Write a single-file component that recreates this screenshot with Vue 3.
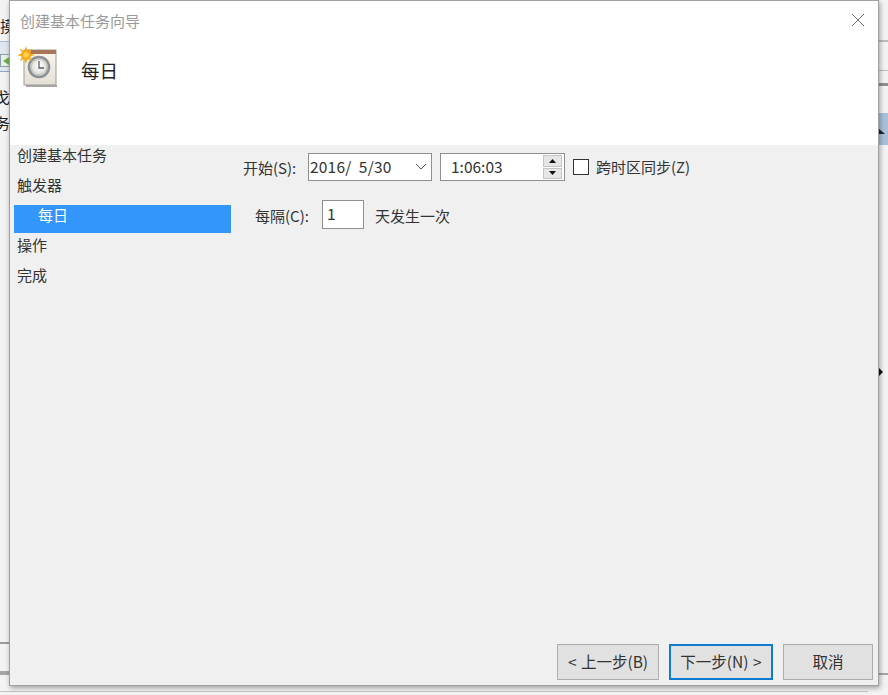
<script setup>
const steps = [
  { label: '创建基本任务' },
  { label: '触发器' },
  { label: '每日', active: true },
  { label: '操作' },
  { label: '完成' },
]
</script>

<template>
  <div class="screen">
    <div class="behind">
      <span class="frag f1">摸</span>
      <div class="band">
        <i class="mini"></i>
        <svg class="arrow" width="6" height="8" viewBox="0 0 6 8"><path d="M0 4 L6 0 L6 8 Z" fill="#6fb04f" /></svg>
      </div>
      <span class="frag f2">戈</span>
      <span class="frag f3">务</span>
      <div class="line l1"></div>
      <div class="line l2"></div>
      <div class="line l3"></div>
      <div class="rband"></div>
      <div class="rline r1"></div>
      <div class="rline r2"></div>
      <div class="rline r3"></div>
      <div class="rline r4"></div>
      <svg class="tri1" width="10" height="12" viewBox="0 0 10 12"><path d="M0 6 L7 12 L0 12 Z" fill="#1a2430" /></svg>
      <svg class="tri2" width="6" height="10" viewBox="0 0 6 10"><path d="M0 0 L5 5 L0 10 Z" fill="#111" /></svg>
    </div>

    <div class="dialog">
      <header class="head">
        <div class="titlebar">
          <span class="title">创建基本任务向导</span>
          <svg class="close" width="14" height="14" viewBox="0 0 14 14">
            <path d="M1 1 L13 13 M13 1 L1 13" stroke="#6f6f6f" stroke-width="1" fill="none" />
          </svg>
        </div>
        <div class="banner">
          <svg class="logo" width="42" height="42" viewBox="0 0 42 42">
            <defs>
              <linearGradient id="page" x1="0" y1="0" x2="0" y2="1">
                <stop offset="0" stop-color="#fbf7ee" />
                <stop offset="1" stop-color="#e4e0d6" />
              </linearGradient>
              <radialGradient id="face" cx="0.5" cy="0.45" r="0.6">
                <stop offset="0" stop-color="#ffffff" />
                <stop offset="1" stop-color="#cfcfc6" />
              </radialGradient>
            </defs>
            <path d="M9 39 L40 39 L40 41 L9 41 Z" fill="#a9a9a5" />
            <rect x="7" y="4" width="32" height="35" fill="url(#page)" stroke="#9b9b96" stroke-width="1" />
            <rect x="7" y="4" width="32" height="4" fill="#a9765a" />
            <circle cx="22" cy="21" r="10" fill="url(#face)" stroke="#8b8f96" stroke-width="2.6" />
            <circle cx="22" cy="21" r="7.6" fill="none" stroke="#c6c4b8" stroke-width="1" />
            <path d="M22 15 L22 22 L27 22" stroke="#5a6068" stroke-width="1.3" fill="none" />
            <g fill="#f6ab16">
              <circle cx="9" cy="9" r="5" />
              <path d="M9 0 L10.6 5 L7.4 5 Z M9 18 L10.6 13 L7.4 13 Z M0 9 L5 7.4 L5 10.6 Z M18 9 L13 7.4 L13 10.6 Z M2.6 2.6 L6.8 5 L5 6.8 Z M15.4 2.6 L13 6.8 L11.2 5 Z M2.6 15.4 L5 11.2 L6.8 13 Z M15.4 15.4 L11.2 13 L13 11.2 Z" />
            </g>
            <circle cx="9" cy="9" r="2.8" fill="#ffd34e" />
          </svg>
          <span class="heading">每日</span>
        </div>
      </header>

      <div class="body">
        <nav class="steps">
          <div v-for="s in steps" :key="s.label" class="step" :class="{ active: s.active }">{{ s.label }}</div>
        </nav>

        <main class="form">
          <div class="row1">
            <label class="lab">开始(S):</label>
            <div class="field combo">
              <span class="dval">2016/&nbsp;&nbsp;5/30</span>
              <svg width="12" height="7" viewBox="0 0 12 7"><path d="M1 1 L6 6 L11 1" stroke="#555" stroke-width="1" fill="none" /></svg>
            </div>
            <div class="field time">
              <span class="tval">1:06:03</span>
              <div class="spin">
                <div class="sbtn"><svg width="7" height="4" viewBox="0 0 7 4"><path d="M3.5 0 L7 4 L0 4 Z" fill="#111" /></svg></div>
                <div class="sbtn"><svg width="7" height="4" viewBox="0 0 7 4"><path d="M0 0 L7 0 L3.5 4 Z" fill="#111" /></svg></div>
              </div>
            </div>
            <div class="check"></div>
            <span class="checktext">跨时区同步(Z)</span>
          </div>
          <div class="row2">
            <label class="lab">每隔(C):</label>
            <div class="field num">1</div>
            <span class="unit">天发生一次</span>
          </div>
        </main>
      </div>

      <footer class="foot">
        <button class="btn b1">&lt; 上一步(B)</button>
        <button class="btn b2">下一步(N) &gt;</button>
        <button class="btn b3">取消</button>
      </footer>
    </div>
  </div>
</template>

<style>
html, body { margin: 0; padding: 0; background: #f2f2f2; }
</style>

<style scoped>
.screen {
  position: relative;
  width: 888px;
  height: 695px;
  overflow: hidden;
  background: #f3f3f3;
  font-family: "Noto Sans CJK SC", "Noto Sans", sans-serif;
  color: #2b2b2b;
}
.behind { position: absolute; inset: 0; }
.frag { position: absolute; left: 0; font-size: 15px; line-height: 18px; color: #222; white-space: nowrap; }
.f1 { top: 17px; }
.f2 { top: 88px; left: -5px; }
.f3 { top: 114px; left: -5px; }
.band { position: absolute; left: 0; top: 41px; width: 10px; height: 31px; background: #dfe6ee; border-top: 1px solid #a6c0dc; border-bottom: 1px solid #8fa6bf; box-sizing: border-box; }
.mini { position: absolute; left: 0; top: 12px; width: 10px; height: 13px; background: #e8efe6; border: 1px solid #8aa0a8; box-sizing: border-box; }
.arrow { position: absolute; left: 3px; top: 15px; }
.line { position: absolute; left: 0; width: 10px; }
.l1 { top: 642px; height: 2px; background: #9b9b9b; }
.l2 { top: 671px; height: 4px; background: #a5a5a5; }
.l3 { top: 691px; height: 1px; width: 868px; background: #c4c4c4; }
.rband { position: absolute; left: 878px; top: 113px; width: 10px; height: 32px; background: #a9c0da; }
.rline { position: absolute; left: 878px; width: 10px; background: #bdbdbd; }
.r1 { top: 40px; height: 2px; }
.r2 { top: 70px; height: 1px; }
.r3 { top: 83px; height: 3px; background: #8f8f8f; }
.r4 { top: 673px; height: 2px; background: #a5a5a5; }
.tri1 { position: absolute; left: 878px; top: 122px; }
.tri2 { position: absolute; left: 878px; top: 367px; }

.dialog {
  position: absolute;
  left: 9px;
  top: 0;
  width: 870px;
  height: 686px;
  box-sizing: border-box;
  border: 1px solid #a0a0a0;
  background: #f0f0f0;
  box-shadow: 1px 2px 5px rgba(0, 0, 0, 0.35);
  display: flex;
  flex-direction: column;
}
.head { height: 144px; background: #fff; flex: none; }
.titlebar { height: 38px; padding: 10px 13px 0 10px; box-sizing: border-box; display: flex; justify-content: space-between; align-items: flex-start; }
.title { font-size: 15px; line-height: 19px; color: #9a9a9a; }
.close { margin-top: 2px; }
.banner { display: flex; align-items: flex-start; padding: 9px 0 0 7px; }
.logo { flex: none; margin-top: -2px; }
.heading { font-size: 18.5px; line-height: 24px; margin: 10px 0 0 22px; color: #222; }

.body { flex: 1; display: flex; min-height: 0; }
.steps { width: 217px; margin-left: 4px; flex: none; }
.step { height: 30px; line-height: 19px; font-size: 15px; padding-left: 3px; color: #333; box-sizing: border-box; }
.step.active { height: 28px; margin: 0 0 2px; line-height: 20px; padding-left: 24px; background: #3296fb; color: #fff; }

.form { flex: 1; padding: 8px 0 0 12px; }
.row1 { display: flex; align-items: center; height: 28px; }
.row2 { display: flex; align-items: center; height: 29px; margin-top: 19px; padding-left: 12px; }
.lab { font-size: 15px; color: #333; white-space: nowrap; }
.row1 .lab { width: 65px; }
.row2 .lab { width: 67px; position: relative; top: 1px; }
.field { box-sizing: border-box; height: 28px; background: #fff; border: 1px solid #8f8f8f; font-size: 15.5px; color: #333; display: flex; align-items: center; }
.combo { width: 124px; padding: 0 4px 2px 1px; justify-content: space-between; }
.dval { letter-spacing: 0.2px; }
.time { width: 125px; margin-left: 8px; padding-left: 10px; justify-content: space-between; }
.tval { line-height: 26px; position: relative; top: -1px; }
.spin { width: 19px; height: 24px; margin-right: 2px; display: flex; flex-direction: column; gap: 1px; }
.sbtn { flex: 1; background: #e6e6e6; border: 1px solid #c4c4c4; display: flex; align-items: center; justify-content: center; }
.check { box-sizing: border-box; width: 16px; height: 16px; margin-left: 8px; background: #fff; border: 1px solid #333; flex: none; }
.checktext { margin-left: 7px; font-size: 15px; color: #333; white-space: nowrap; position: relative; top: -1px; }
.num { width: 42px; height: 29px; padding: 0 0 4px 4px; }
.unit { margin-left: 11px; font-size: 15px; color: #333; position: relative; top: 1px; }

.foot { flex: none; height: 41px; display: flex; padding-left: 547px; gap: 10px; box-sizing: border-box; }
.btn { box-sizing: border-box; height: 36px; padding: 0 0 2px; background: #e1e1e1; border: 1px solid #adadad; font-family: inherit; font-size: 15.5px; color: #333; white-space: nowrap; word-spacing: 1px; }
.b1 { width: 102px; }
.b2 { width: 104px; border: 2px solid #0f7bd0; }
.b3 { width: 90px; }
</style>
